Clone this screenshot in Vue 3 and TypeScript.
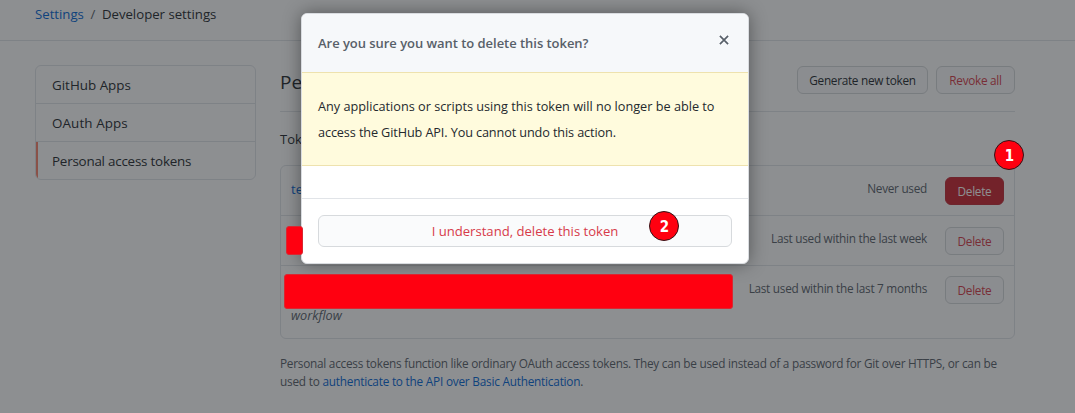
<script setup lang="ts">
interface MenuItem { label: string; active?: boolean }
interface Token { name: string; used: string; scope?: string; armed?: boolean; size: string }

const menu: MenuItem[] = [
  { label: 'GitHub Apps' },
  { label: 'OAuth Apps' },
  { label: 'Personal access tokens', active: true },
]
const tokens: Token[] = [
  { name: 'test', used: 'Never used', armed: true, size: 'first' },
  { name: '', used: 'Last used within the last week', size: 'middle' },
  { name: '', used: 'Last used within the last 7 months', scope: 'workflow', size: 'last' },
]
</script>

<template>
  <div class="page">
    <header class="topbar">
      <a class="link crumb-root">Settings</a><span class="slash">/</span><span class="crumb-leaf">Developer settings</span>
    </header>
    <div class="columns">
      <nav class="menu">
        <a v-for="item in menu" :key="item.label" class="menu-item" :class="{ active: item.active }"><span>{{ item.label }}</span></a>
      </nav>
      <main class="content">
        <div class="subhead">
          <h2>Personal access tokens</h2>
          <div class="actions">
            <button class="btn generate">Generate new token</button>
            <button class="btn danger revoke">Revoke all</button>
          </div>
        </div>
        <p class="intro">Tokens</p>
        <ul class="tokens">
          <li v-for="token in tokens" :key="token.used" :class="token.size">
            <div class="info">
              <a class="link name">{{ token.name }}</a>
              <em v-if="token.scope">{{ token.scope }}</em>
            </div>
            <span class="used">{{ token.used }}</span>
            <button class="btn danger delete" :class="{ armed: token.armed }">Delete</button>
          </li>
        </ul>
        <p class="note">
          <span class="note-a">Personal access tokens function like ordinary OAuth access tokens. They can be used instead of a password for Git over HTTPS, or can be</span><br>
          <span class="note-b">used to <a class="link">authenticate to the API over Basic Authentication</a>.</span>
        </p>
      </main>
    </div>

    <div class="overlay"></div>

    <section class="dialog" role="dialog">
      <div class="dialog-head">
        <h3>Are you sure you want to delete this token?</h3>
        <svg class="close" width="10" height="10" viewBox="0 0 10 10"><path d="M.9.9 9.1 9.1M9.1.9.9 9.1" /></svg>
      </div>
      <div class="warning"><span class="warn-a">Any applications or scripts using this token will no longer be able to</span><br><span class="warn-b">access the GitHub API. You cannot undo this action.</span></div>
      <div class="spacer"></div>
      <div class="dialog-foot">
        <button class="confirm"><span>I understand, delete this token</span></button>
      </div>
    </section>

    <div class="redact small"></div>
    <div class="redact large"></div>
    <div class="badge one">1</div>
    <div class="badge two">2</div>
  </div>
</template>

<style>
body { margin: 0; overflow: hidden; }
</style>

<style scoped>
* { box-sizing: border-box; }
.page {
  position: relative; width: 1075px; height: 413px; overflow: hidden;
  background: #fff; color: #24292e;
  font-family: "Open Sans", "Noto Sans", sans-serif; font-size: 13px;
}
h2, h3, p, ul { margin: 0; padding: 0; font-weight: 400; }
ul { list-style: none; }
button { font-family: inherit; margin: 0; padding: 0; white-space: nowrap; }
.link { color: #0366d6; }
.topbar { display: flex; height: 41px; padding: 4px 0 0 35px; font-size: 13.2px; line-height: 20px; border-bottom: 1px solid #e1e4e8; white-space: nowrap; }
.slash { width: 18px; text-align: center; color: #586069; }
.columns { display: flex; gap: 24px; padding: 24px 0 0 35px; }
.menu { width: 221px; height: 115px; border: 1px solid #e1e4e8; border-radius: 6px; overflow: hidden; }
.menu-item { display: block; height: 38px; padding-left: 16px; font-size: 13.4px; letter-spacing: -.22px; line-height: 38px; border-bottom: 1px solid #e1e4e8; white-space: nowrap; }
.menu-item:first-child { letter-spacing: 0; }
.menu-item:nth-child(2) { letter-spacing: .1px; }
.menu-item:last-child { border-bottom: 0; }
.active { padding-left: 14px; border-left: 2px solid #f9826c; }
.content { width: 735px; }
.subhead { display: flex; justify-content: space-between; height: 47px; border-bottom: 1px solid #e1e4e8; }
.subhead h2 { font-size: 19px; font-weight: 400; line-height: 34px; }
.actions { display: flex; gap: 8px; padding-top: 1px; }
.btn { height: 28px; border: 1px solid #d5d8da; border-radius: 6px; background: #fafbfc; color: #24292e; font-size: 11.8px; letter-spacing: -.3px; line-height: 25px; }
.generate { width: 131px; }
.revoke { width: 79px; }
.danger { color: #d73a49; }
.intro { height: 53px; padding-top: 17px; line-height: 20px; }
.tokens { height: 174px; border: 1px solid #e1e4e8; border-radius: 6px; }
.tokens li { display: flex; align-items: flex-start; height: 50px; padding: 11px 10px 0; border-bottom: 1px solid #e1e4e8; }
.tokens li.last { height: 72px; padding-top: 10px; border: 0; }
.info { display: flex; flex-direction: column; flex: 1; font-size: 13px; }
.info .name { height: 31px; line-height: 24px; }
.info em { color: #586069; font-size: 12.7px; line-height: 16px; }
.used { margin-right: 18px; color: #586069; font-size: 11.8px; letter-spacing: -.28px; line-height: 22px; }
.last .used { line-height: 24px; }
.delete { width: 59px; }
.armed { background: #cb2431; border-color: #c02b37; color: #fff; }
.note { padding-top: 15px; color: #586069; font-size: 11.8px; letter-spacing: -.25px; line-height: 18px; white-space: nowrap; }
.note-b { letter-spacing: -.22px; }
.overlay { position: absolute; inset: 0; background: rgba(27, 31, 35, .5); }
.dialog {
  position: absolute; left: 301px; top: 13px; width: 448px; height: 251px;
  border: 1px solid #d9dce0; border-radius: 6px; overflow: hidden; background: #fff;
  box-shadow: 0 0 18px rgba(0, 0, 0, .4);
}
.dialog-head { display: flex; justify-content: space-between; height: 58px; padding: 0 19px 0 16px; background: #f6f8fa; color: #586069; }
.dialog-head h3 { font-size: 13px; font-weight: 600; letter-spacing: -.04px; line-height: 59px; white-space: nowrap; }
.close { margin-top: 21px; fill: none; stroke: #586069; stroke-width: 1.7; }
.warning { height: 94px; padding: 20px 16px 0; border: solid #eee2ae; border-width: 1px 0; background: #fffbdd; font-size: 12.7px; line-height: 26px; white-space: nowrap; }
.warn-b { letter-spacing: -.12px; }
.spacer { height: 33px; border-bottom: 1px solid #e1e4e8; }
.dialog-foot { padding: 16px 16px 0; }
.confirm { display: block; width: 414px; height: 32px; border: 1px solid #d7dadd; border-radius: 6px; background: #fafbfc; color: #d73a49; font-size: 13.1px; line-height: 30px; }
.redact { position: absolute; background: #ff0010; border: 1px solid #d92731; border-radius: 3px; }
.small { left: 286px; top: 226px; width: 17px; height: 29px; }
.large { left: 284px; top: 274px; width: 449px; height: 35px; }
.badge { position: absolute; width: 30px; height: 30px; padding-left: 1px; border: 1px solid #331317; border-radius: 50%; background: #ff0010; color: #fff; font-family: "DejaVu Sans Condensed", "DejaVu Sans", sans-serif; font-size: 15px; font-weight: 700; line-height: 31px; text-align: center; }
.one { left: 994px; top: 140px; }
.two { left: 649px; top: 211px; }
</style>
